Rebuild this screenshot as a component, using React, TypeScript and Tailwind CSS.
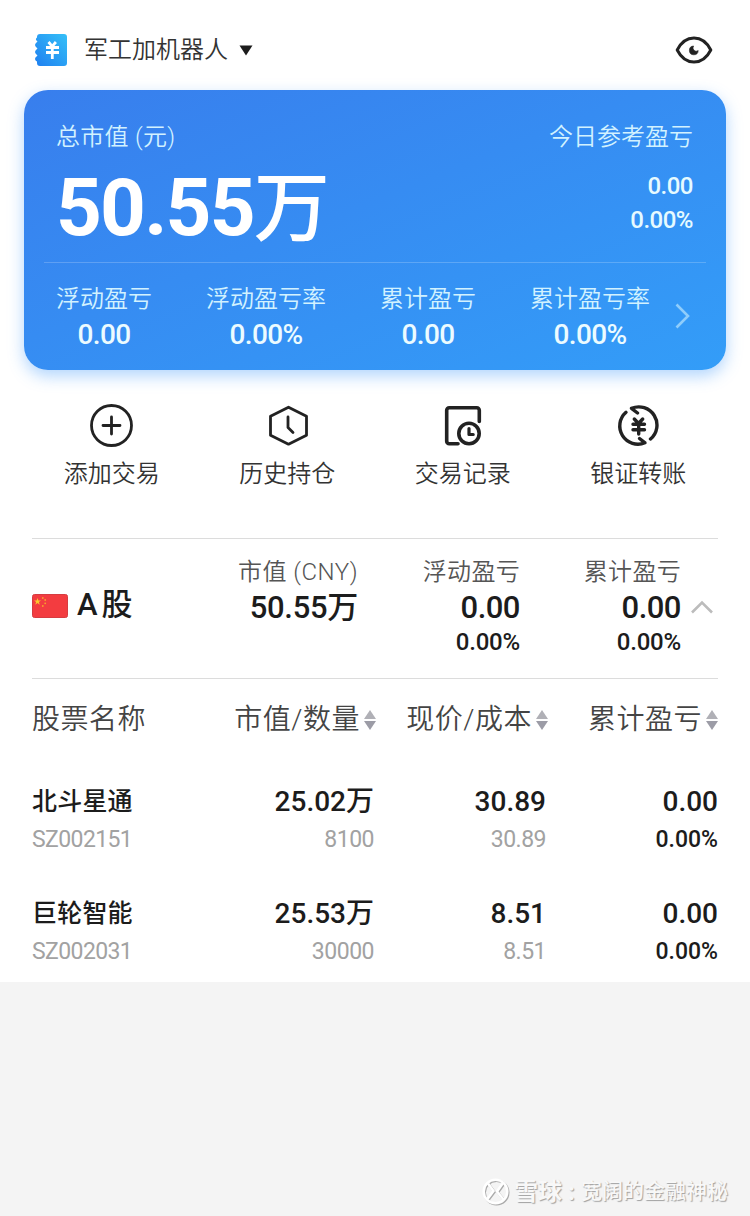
import type { ReactNode } from "react";

interface Stock {
  name: string;
  code: string;
  value: string;
  amount: string;
  price: string;
  cost: string;
  profit: string;
  rate: string;
}

const stats = [
  { label: "浮动盈亏", value: "0.00" },
  { label: "浮动盈亏率", value: "0.00%" },
  { label: "累计盈亏", value: "0.00" },
  { label: "累计盈亏率", value: "0.00%" },
];

const stocks: Stock[] = [
  { name: "北斗星通", code: "SZ002151", value: "25.02万", amount: "8100", price: "30.89", cost: "30.89", profit: "0.00", rate: "0.00%" },
  { name: "巨轮智能", code: "SZ002031", value: "25.53万", amount: "30000", price: "8.51", cost: "8.51", profit: "0.00", rate: "0.00%" },
];

const actions = [
  { label: "添加交易", icon: <AddIcon /> },
  { label: "历史持仓", icon: <HistoryIcon /> },
  { label: "交易记录", icon: <RecordIcon /> },
  { label: "银证转账", icon: <TransferIcon /> },
];

function ActionSvg({ children }: { children: ReactNode }) {
  return (
    <svg width="44" height="44" viewBox="0 0 44 44" fill="none" stroke="#222" strokeWidth="2.8" strokeLinecap="round" strokeLinejoin="round">
      {children}
    </svg>
  );
}

function AddIcon() {
  return (
    <ActionSvg>
      <circle cx="21.5" cy="21.5" r="20" />
      <path d="M21.5 13v17M13 21.5h17" />
    </ActionSvg>
  );
}

function HistoryIcon() {
  return (
    <ActionSvg>
      <path d="M23.500 3.200 41.500 12.200V31.200L23.500 40.200 5.500 31.200V12.200Z" />
      <path d="M23 13v10.500l5 5" />
    </ActionSvg>
  );
}

function RecordIcon() {
  return (
    <ActionSvg>
      <path d="M17 39.800H8.200a2.500 2.500 0 0 1-2.500-2.500V6.200a2.500 2.500 0 0 1 2.500-2.500h27.600a2.500 2.500 0 0 1 2.500 2.500V17.500" strokeWidth="3.6" />
      <circle cx="28" cy="29.500" r="10.200" strokeWidth="3.6" />
      <path d="M28 24.500v6h4.200" strokeWidth="3.2" />
    </ActionSvg>
  );
}

function TransferIcon() {
  return (
    <ActionSvg>
      <g strokeWidth="3.4">
        <path d="M10 8.300A18.200 18.200 0 0 0 29 38.800L23.500 34.500" />
        <path d="M34.500 35A18.200 18.200 0 0 0 15.500 4.400L21.500 9" />
      </g>
      <path d="M18.300 15l4.200 4.500 4.200-4.500M17 20.200h11.500M17 25.800h11.500M22.700 20v10" strokeWidth="3.4" />
    </ActionSvg>
  );
}

function WalletIcon() {
  return (
    <svg width="32" height="32" viewBox="0 0 32 32">
      <defs>
        <linearGradient id="wallet" x1="0" y1="1" x2="1" y2="0">
          <stop offset="0" stopColor="#1f7ff0" />
          <stop offset="1" stopColor="#35c0f8" />
        </linearGradient>
      </defs>
      <path
        d="M5 0h24a3 3 0 0 1 3 3v26a3 3 0 0 1-3 3H5a3 3 0 0 1-3-3v-1.500a2.600 2.600 0 0 1-1-4.500l1.500-1.500L1 20a2.600 2.600 0 0 1 0-4l1.500-1.500L1 13a2.600 2.600 0 0 1 0-4l1.500-1.500L1 6a2.400 2.400 0 0 1 1-2.500V3a3 3 0 0 1 3-3Z"
        fill="url(#wallet)"
      />
      <path d="M13.500 8l3.700 4.300L20.900 8M11 13.500h13M11 18.500h13M17.300 13v12" stroke="#fff" strokeWidth="2.800" fill="none" />
    </svg>
  );
}

function EyeIcon() {
  return (
    <svg width="38" height="30" viewBox="0 0 38 30" fill="none">
      <path d="M2.200 15C6 7.500 12 3 19 3s13 4.500 16.800 12C32 22.500 26 27 19 27S6 22.500 2.200 15Z" stroke="#222" strokeWidth="3" strokeLinejoin="round" />
      <path d="M18.600 11a4.400 4.400 0 1 0 4.600 4.600 3.300 3.300 0 0 1-4.600-4.600Z" fill="#222" stroke="#222" strokeWidth="0.600" />
    </svg>
  );
}

function Flag() {
  return (
    <svg width="36" height="24" viewBox="0 0 36 24">
      <rect x="0.500" y="0.500" width="35" height="23" rx="2" fill="#f33c40" stroke="#d63c41" />
      <path d="M5.500 4l.9 2.500h2.600l-2.100 1.600.8 2.600-2.200-1.600-2.200 1.600.8-2.600L2 6.500h2.600Z" fill="#fcc92c" />
      <g fill="#f7a22c">
        <circle cx="10.800" cy="4" r="0.900" />
        <circle cx="13.200" cy="6" r="0.900" />
        <circle cx="13.200" cy="9.300" r="0.900" />
        <circle cx="10.800" cy="12" r="0.900" />
      </g>
    </svg>
  );
}

function SortIcon() {
  return (
    <svg width="12" height="20" viewBox="0 0 12 20">
      <path d="M6 0l6 9H0Z" fill="#b0b0b6" />
      <path d="M6 20l6-9H0Z" fill="#9c9ca6" />
    </svg>
  );
}

function SortHeader({ label }: { label: string }) {
  return (
    <div className="flex items-center justify-end gap-1 whitespace-nowrap">
      <span>{label}</span>
      <SortIcon />
    </div>
  );
}

function SummaryCard() {
  return (
    <section className="mx-6 h-[280px] rounded-3xl bg-linear-to-br from-[#387eed] to-[#339df8] text-[#d2f2ff] shadow-[0_6px_16px_rgba(60,150,250,0.4)]">
      <div className="flex h-[172px] justify-between pl-8 pr-[33px] pt-[31px]">
        <div>
          <div className="text-[24px] leading-8 font-[350] tracking-[0.300px]">总市值 (元)</div>
          <div className="mt-[11px] text-[80px] leading-[88px] font-bold tracking-[-1.800px] text-white">
            50.55<span className="text-[76px] font-medium">万</span>
          </div>
        </div>
        <div className="text-right">
          <div className="text-[24px] leading-8 font-[350]">今日参考盈亏</div>
          <div className="mt-4 text-[24px] leading-[34px] font-medium tracking-[-0.500px] text-[#e6faff]">
            <div>0.00</div>
            <div>0.00%</div>
          </div>
        </div>
      </div>
      <div className="mx-5 h-px bg-white/20" />
      <div className="flex items-center pl-8 pt-[19px]">
        <div className="flex gap-[54px]">
          {stats.map((s) => (
            <div key={s.label} className="text-center">
              <div className="text-[24px] leading-[34px] font-[350]">{s.label}</div>
              <div className="text-[28px] leading-[38px] font-medium tracking-[-0.600px] text-[#ecfbff]">{s.value}</div>
            </div>
          ))}
        </div>
        <svg className="-mt-1 ml-[25px]" width="15" height="26" viewBox="0 0 15 26" fill="none" stroke="#8fcdfb" strokeWidth="2.600">
          <path d="M1.500 1.500 13 13 1.500 24.500" />
        </svg>
      </div>
    </section>
  );
}

function MarketRow() {
  return (
    <section className="mx-8 flex h-[141px] border-y border-[#dcdcdc]">
      <div className="flex h-[134px] w-[120px] items-center gap-[9px] whitespace-nowrap">
        <Flag />
        <span className="-mt-0.5 text-[31px] font-medium">A<span className="ml-1">股</span></span>
      </div>
      <div className="w-[206px] pt-4 text-right">
        <div className="text-[24px] leading-[34px] font-[350] tracking-[0.500px] text-[#555]">市值 (CNY)</div>
        <div className="mt-px text-[31px] leading-9 font-medium tracking-[-0.300px]">50.55万</div>
      </div>
      <div className="w-[162px] pt-4 text-right">
        <div className="text-[24px] leading-[34px] font-[350] tracking-[0.300px] text-[#555]">浮动盈亏</div>
        <div className="mt-px text-[31px] leading-9 font-medium tracking-[-0.500px]">0.00</div>
        <div className="text-[24px] leading-8 font-medium tracking-[-0.200px]">0.00%</div>
      </div>
      <div className="w-[161px] pt-4 text-right">
        <div className="text-[24px] leading-[34px] font-[350] tracking-[0.300px] text-[#555]">累计盈亏</div>
        <div className="mt-px text-[31px] leading-9 font-medium tracking-[-0.500px]">0.00</div>
        <div className="text-[24px] leading-8 font-medium tracking-[-0.200px]">0.00%</div>
      </div>
      <svg className="ml-[10px] mt-[61px]" width="22" height="14" viewBox="0 0 22 14" fill="none" stroke="#bcbcbc" strokeWidth="2.600">
        <path d="M1 12.500 11 2.500 21 12.500" />
      </svg>
    </section>
  );
}

function StockRow({ stock }: { stock: Stock }) {
  return (
    <div className="grid h-28 grid-cols-[150px_192px_172px_172px] pt-[13px] text-right text-[28px] leading-[38px] font-medium">
      <div className="text-left">
        <div className="text-[25px] tracking-[0.200px]">{stock.name}</div>
        <div className="text-[23px] font-normal tracking-[-0.600px] text-[#a2a2a2]">{stock.code}</div>
      </div>
      <div>
        <div>{stock.value}</div>
        <div className="text-[23px] font-normal tracking-[-0.500px] text-[#a2a2a2]">{stock.amount}</div>
      </div>
      <div>
        <div>{stock.price}</div>
        <div className="text-[23px] font-normal tracking-[-0.500px] text-[#a2a2a2]">{stock.cost}</div>
      </div>
      <div>
        <div>{stock.profit}</div>
        <div className="text-[23px]">{stock.rate}</div>
      </div>
    </div>
  );
}

function Watermark() {
  return (
    <footer className="flex h-12 items-center justify-end pr-[22px] text-[#f8f8f8] [text-shadow:1px_1px_1px_#a0a0a0]">
      <svg className="mr-[3px]" width="29" height="29" viewBox="0 0 29 29" fill="none">
        <g stroke="#aaa" strokeWidth="2.500" transform="translate(1 1)">
          <circle cx="13.500" cy="13.500" r="11.800" />
          <path d="M6 5.500l5.500 7.500-6 8M21 5l-6 8.500 6.500 8" />
        </g>
        <g stroke="#fff" strokeWidth="2.500">
          <circle cx="13.500" cy="13.500" r="11.800" />
          <path d="M6 5.500l5.500 7.500-6 8M21 5l-6 8.500 6.500 8" />
        </g>
      </svg>
      <span className="w-[67px] text-[24px] font-bold whitespace-nowrap">雪球 :</span>
      <span className="text-[21px] font-medium">宽阔的金融神秘</span>
    </footer>
  );
}

export default function App() {
  return (
    <div className="flex h-[1216px] w-[750px] flex-col bg-[#f4f4f4] font-[Roboto,'Noto_Sans_CJK_SC',sans-serif] text-[#1c1c1c]">
      <main className="h-[982px] bg-white">
        <header className="flex h-[90px] items-center pl-[35px] pr-[37px] pt-[10px]">
          <WalletIcon />
          <span className="ml-[17px] text-[24px] leading-8 font-[350] text-[#333]">军工加机器人</span>
          <svg className="ml-[11px]" width="14" height="11" viewBox="0 0 14 11">
            <path d="M0.500 0.500h13L7 10.500Z" fill="#1c1c1c" />
          </svg>
          <div className="ml-auto">
            <EyeIcon />
          </div>
        </header>
        <SummaryCard />
        <nav className="mx-6 grid h-[168px] grid-cols-4 pt-[34px]">
          {actions.map((a) => (
            <div key={a.label} className="flex flex-col items-center">
              {a.icon}
              <span className="mt-[10px] text-[24px] leading-8 font-[350] text-[#333]">{a.label}</span>
            </div>
          ))}
        </nav>
        <MarketRow />
        <section className="mx-8">
          <div className="grid h-[91px] grid-cols-[150px_194px_172px_170px] content-start pt-[21px] text-[28px] leading-10 font-[350] tracking-[0.500px] text-[#444]">
            <span>股票名称</span>
            <SortHeader label="市值/数量" />
            <SortHeader label="现价/成本" />
            <SortHeader label="累计盈亏" />
          </div>
          {stocks.map((s) => (
            <StockRow key={s.code} stock={s} />
          ))}
        </section>
      </main>
      <div className="mt-auto">
        <Watermark />
      </div>
    </div>
  );
}
